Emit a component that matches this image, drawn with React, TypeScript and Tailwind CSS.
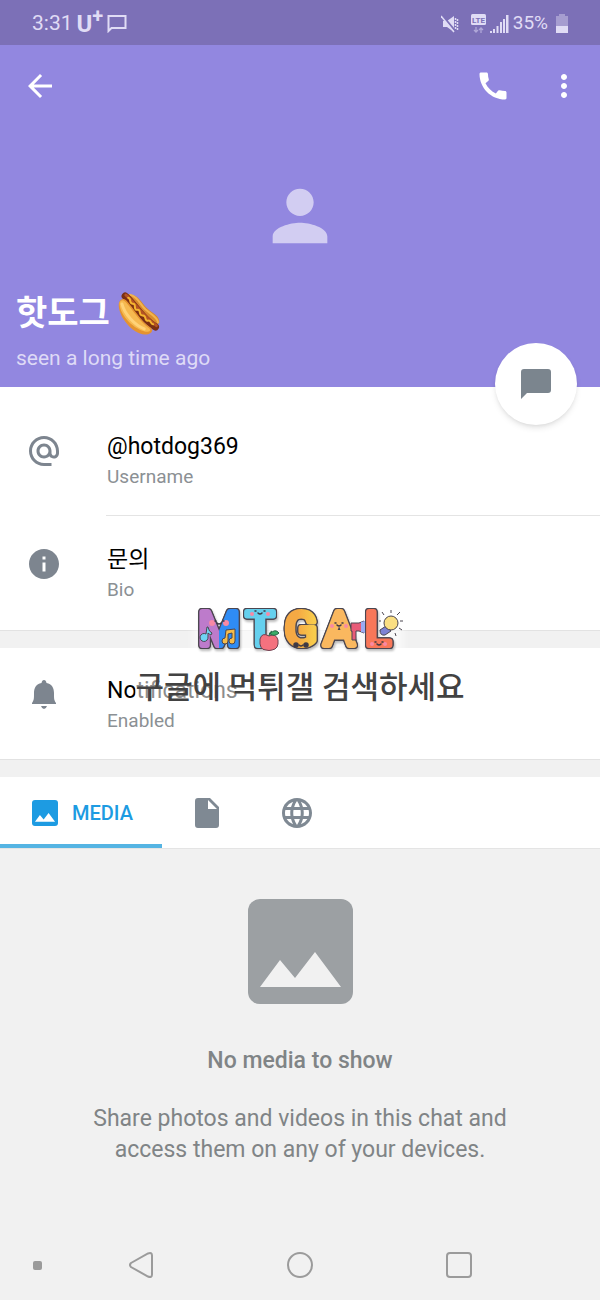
import React from 'react';
import {
  MdAlternateEmail,
  MdArrowBack,
  MdCall,
  MdInfo,
  MdLanguage,
  MdMoreVert,
  MdPerson,
} from 'react-icons/md';

const StatusBar: React.FC = () => (
  <div className="flex h-[45px] items-center justify-between bg-[#7c70b7] pt-0.5 pr-8 pl-8 text-[#e0dcf5]">
    <div className="flex items-center">
      <span className="text-[21px]">3:31</span>
      <span className="ml-1 flex text-2xl font-bold">
        U<sup className="top-0 self-start text-xl leading-4">+</sup>
      </span>
      <svg className="ml-1 h-[19px] w-5" viewBox="0 0 20 19" fill="none" stroke="currentColor" strokeWidth="2">
        <path d="M1.5 17V2H18.500V14H4.500Z" />
      </svg>
    </div>
    <div className="flex items-center">
      {/* Muted speaker */}
      <svg className="h-[18px] w-[18px]" viewBox="0 0 18 18">
        <path d="M2 6h4l7-5v16l-7-5H2z" fill="currentColor" />
        <path d="M1 0l14 17" stroke="#7c70b7" strokeWidth="2" />
        <path d="M0 1l13 16" stroke="currentColor" strokeWidth="1.500" />
        <path d="M14.500 3v12M16.500 4v11" stroke="currentColor" strokeWidth="1.500" strokeDasharray="2 1" />
      </svg>
      <svg className="ml-3 h-5 w-[15px]" viewBox="0 0 15 20">
        <rect width="15" height="11" rx="1.500" fill="currentColor" />
        <text x="7.500" y="8.500" fontSize="8" fontWeight="700" textAnchor="middle" fill="#7c70b7">LTE</text>
        <path d="M5 13v5M3 16l2 2 2-2M10 19v-5M8 16l2-2 2 2" fill="none" stroke="#b0a8d8" strokeWidth="1.300" />
      </svg>
      <svg className="ml-1 h-[18px] w-[19px]" viewBox="0 0 19 18" fill="currentColor">
        <path d="M0 16h2v2H0zM3 14h2v4H3zM6.500 11h2v7h-2zM10 7h2v11h-2zM13 4h2v14h-2zM16 0h2.500v18H16z" />
      </svg>
      <span className="ml-1 text-[19px]">35%</span>
      <svg className="ml-2 h-[19px] w-3" viewBox="0 0 12 19">
        <path d="M3 0h6v2h3v17H0V2h3z" fill="#a69dd0" />
        <path d="M0 12h12v7H0z" fill="currentColor" />
      </svg>
    </div>
  </div>
);

const HotDog: React.FC = () => (
  <svg className="h-[43px] w-[42px]" viewBox="0 0 128 130" fill="none" strokeLinecap="round" role="img" aria-label="hot dog">
    <path d="M30 8C60 2 70 32 88 48C106 66 127 70 126 93L112 104L22 22Z" fill="#d98a2c" />
    <path d="M36 8C60 12 66 36 84 53C100 67 120 76 122 92" stroke="#f2b44e" strokeWidth="6" />
    <path d="M22 12C44 28 72 82 114 106" stroke="#7b2f12" strokeWidth="22" />
    <path d="M24 9C46 25 76 74 117 102" stroke="#b65324" strokeWidth="9" />
    <path d="M3 32C8 20 17 17 27 27C48 49 68 87 98 107C112 118 99 130 82 129C40 126 -4 66 3 32Z" fill="#e5932f" />
    <path d="M5 31C11 20 19 24 28 35C48 58 68 91 94 109C105 119 91 123 79 119C43 110 2 65 5 31Z" fill="#f6b950" />
    <path d="M12 36C20 67 50 100 80 112" stroke="#ffd278" strokeWidth="9" />
    <path d="M31 17C42 19 32 33 44 35C58 34 45 53 58 54C72 51 61 72 75 71C88 69 79 89 91 87C102 84 98 97 107 98" stroke="#f5b52f" strokeWidth="6" />
  </svg>
);

const ImageGlyph: React.FC<{ className: string; peaks: string }> = ({ className, peaks }) => (
  <svg className={className} viewBox="0 0 105 105">
    <rect width="105" height="105" rx="12" fill="currentColor" />
    <path d="M12 88L32 61L47 79L67 53L93 88Z" className={peaks} />
  </svg>
);

type InfoRowProps = {
  icon: React.ReactNode;
  title: string;
  label: string;
};

const InfoRow: React.FC<InfoRowProps> = ({ icon, title, label }) => (
  <div className="flex">
    <div className="mt-0.5 ml-[26px] h-9 w-9 text-[#7d858f]">{icon}</div>
    <div className="ml-[45px]">
      <div className="text-[23px] leading-8 text-black">{title}</div>
      <div className="text-[19px] leading-7 text-[#8b9094]">{label}</div>
    </div>
  </div>
);

const Logo: React.FC = () => (
  <svg className="relative h-14 w-[210px]" viewBox="0 0 210 56" role="img" aria-label="MTGAL">
    <defs>
      <linearGradient id="m">
        <stop offset="0.500" stopColor="#bd7bcb" />
        <stop offset="0.500" stopColor="#2f8cf5" />
      </linearGradient>
      <linearGradient id="g">
        <stop offset="0.400" stopColor="#f5a944" />
        <stop offset="0.900" stopColor="#f8cb4b" />
      </linearGradient>
    </defs>
    <g
      className="[filter:drop-shadow(1px_0_0_#4b4650)_drop-shadow(-1px_0_0_#4b4650)_drop-shadow(0_1px_0_#4b4650)_drop-shadow(0_-1px_0_#4b4650)_drop-shadow(1px_2px_1px_#0004)]"
      fontSize="47"
      textAnchor="middle"
      strokeWidth="6"
      strokeLinejoin="round"
    >
      <text x="26" y="44" fill="url(#m)" stroke="url(#m)">M</text>
      <text x="67" y="44" fill="#65d0ee" stroke="#65d0ee">T</text>
      <text x="108" y="44" fill="url(#g)" stroke="url(#g)">G</text>
      <text x="146" y="44" fill="#fab85f" stroke="#fab85f">A</text>
      <text x="185" y="44" fill="#f87759" stroke="#f87759">L</text>
    </g>
    {/* Faces */}
    <g fill="#f889a4">
      <circle cx="19" cy="22" r="3" />
      <circle cx="33" cy="22" r="3" />
      <circle cx="59" cy="13" r="2" />
      <circle cx="75" cy="13" r="2" />
      <circle cx="139" cy="25" r="2" />
      <circle cx="153" cy="25" r="2" />
      <circle cx="179" cy="43" r="2" />
      <circle cx="192" cy="43" r="2" />
    </g>
    <g fill="none" stroke="#3e3a46" strokeWidth="1.500" strokeLinecap="round">
      <path d="M22 20h1M30 20h1M24 22q2 2 4 0M62 10h1M71 10h1M65 12q2 2 4 0M142 22h1M149 22h1M144 24q2 2 4 0M182 41h1M189 41h1M184 43q2 2 4 0" />
      <circle cx="103" cy="44" r="2" fill="#3e3a46" />
      <circle cx="113" cy="44" r="2" fill="#3e3a46" />
      <path d="M106 44q2 2 4 0" />
    </g>
    {/* Music notes */}
    <g stroke="#4b4650" strokeWidth="1">
      <path d="M14 26l1 0q1 5 4 6l-1 2q-2-1-3-2v4a4 4 0 1 1-2-3z" fill="#6fd4f4" />
      <path d="M33 29l9-1v12a3 3 0 1 1-3-3v-5l-4 1v7a3 3 0 1 1-3-3z" fill="#f6bc4b" />
    </g>
    {/* Apple */}
    <path d="M76 35q-7-4-9 3q-1 11 6 11q3 1 6 0q7-1 6-10q-2-7-9-4z" fill="#f4727f" stroke="#704050" strokeWidth="1" />
    <path d="M76 35q0-4 3-5M77 33q5-6 9-1q-4 4-9 1z" fill="#39ad68" stroke="#286646" strokeWidth="1" />
    {/* Megaphone */}
    <path d="M158 22h8l5-2v12l-5-2h-3v9h-4v-9h-1z" fill="#e85b78" stroke="#4b4650" strokeWidth="1" />
    <path d="M168 21l4-1v12l-4-1z" fill="#9baaf1" />
    {/* Light bulb */}
    <g stroke="#4b4650" strokeWidth="1">
      <path d="M187 29l6-4 5 5-6 4q-5 1-5-5z" fill="#7d83d5" />
      <circle cx="198" cy="22" r="7" fill="#fbdf83" />
      <path d="M198 12V9M191 14l-2-3M204 14l3-3M207 20h3M206 27l3 2M202 32l1 3M188 20h-2" />
    </g>
  </svg>
);

const Watermark: React.FC = () => (
  <div className="pointer-events-none absolute inset-x-0 top-[601px] flex flex-col items-center">
    <div className="relative mr-1">
      <div className="absolute inset-0 bg-white/60 blur-xs" />
      <Logo />
    </div>
    <div className="mt-[11px] bg-white/55 text-[31px] leading-10 font-medium whitespace-nowrap text-[#424242]">
      구글에 먹튀갤 검색하세요
    </div>
  </div>
);

const App: React.FC = () => {
  return (
    <div className="relative flex min-h-screen flex-col bg-[#f1f1f1] font-[Roboto,'Noto_Sans_CJK_KR',sans-serif]">
      <header className="relative bg-[#9287e0] text-white">
        <StatusBar />
        <div className="flex h-[82px] items-center pr-[18px] pl-[22px]">
          <button type="button" aria-label="Back">
            <MdArrowBack size={36} />
          </button>
          <button type="button" aria-label="Call" className="ml-auto">
            <MdCall size={36} />
          </button>
          <button type="button" aria-label="More options" className="ml-[35px]">
            <MdMoreVert size={36} />
          </button>
        </div>
        <div className="mt-12 flex justify-center text-[#d2cdf2]">
          <MdPerson size={82} />
        </div>
        <div className="px-4 pt-8 pb-[13px]">
          <h1 className="flex h-12 items-center gap-2 text-[34px] font-bold">
            핫도그
            <HotDog />
          </h1>
          <p className="mt-[5px] text-[21px] leading-8 text-[#dedaf6]">seen a long time ago</p>
        </div>
        <button
          type="button"
          aria-label="Send message"
          className="absolute right-[23px] -bottom-[38px] flex h-[82px] w-[82px] items-center justify-center rounded-full bg-white text-[#7b858e] shadow-md"
        >
          <svg className="h-[30px] w-[30px]" viewBox="0 0 30 30" fill="currentColor">
            <path d="M3 0h24q3 0 3 3v18q0 3-3 3H6l-6 6V3q0-3 3-3z" />
          </svg>
        </button>
      </header>

      <section className="border-b border-[#e2e2e2] bg-white">
        <div className="pt-11">
          <InfoRow icon={<MdAlternateEmail size={36} />} title="@hotdog369" label="Username" />
        </div>
        <div className="mt-6 ml-[106px] border-t border-[#e4e4e4]" />
        <div className="pt-7 pb-[26px]">
          <InfoRow icon={<MdInfo size={36} />} title="문의" label="Bio" />
        </div>
      </section>

      <section className="mt-[17px] border-b border-[#e2e2e2] bg-white pt-[27px] pb-6">
        <InfoRow
          icon={
            <svg viewBox="0 0 36 36" fill="currentColor">
              <path d="M18 3q2 0 2.500 3C26 7 28 11 28 16c0 6 0 7 2 10v1H6v-1c2-3 2-4 2-10 0-5 2-9 7.500-10q.5-3 2.500-3zM15 29h6q-1 3-3 3t-3-3z" />
            </svg>
          }
          title="Notifications"
          label="Enabled"
        />
      </section>

      <nav className="mt-[17px] flex h-[72px] border-b border-[#e4e4e4] bg-white text-[#7f8993]" role="tablist">
        <button
          type="button"
          role="tab"
          aria-selected="true"
          className="flex w-[162px] items-center border-b-4 border-[#55b4e3] pt-1 pl-8 text-[20px] font-medium text-[#1d9be2]"
        >
          <ImageGlyph className="mr-[14px] h-[26px] w-[26px]" peaks="fill-white" />
          MEDIA
        </button>
        <button type="button" role="tab" aria-selected="false" aria-label="Files" className="flex w-[90px] items-center justify-center">
          <svg className="h-[30px] w-6" viewBox="0 0 24 30" fill="currentColor">
            <path d="M3 0h12l9 9v18q0 3-3 3H3q-3 0-3-3V3q0-3 3-3zM13 2v9h9z" fillRule="evenodd" />
          </svg>
        </button>
        <button type="button" role="tab" aria-selected="false" aria-label="Links" className="flex w-[90px] items-center justify-center">
          <MdLanguage size={36} />
        </button>
      </nav>

      <main className="flex flex-1 flex-col items-center pt-[50px] text-center text-[#808486]">
        <ImageGlyph className="h-[105px] w-[105px] text-[#9ca0a3]" peaks="fill-[#f1f1f1]" />
        <h2 className="mt-[41px] text-[23px] leading-8 font-medium">No media to show</h2>
        <p className="mt-[26px] max-w-[440px] text-[23px] leading-[31px]">
          Share photos and videos in this chat and access them on any of your devices.
        </p>
      </main>

      <footer className="grid h-[70px] grid-cols-[1fr_26.5%_26.5%_26.5%_1fr] items-center text-[#9b9b9b]">
        <div className="flex justify-center pl-[13px]">
          <div className="h-[9px] w-[9px] rounded-xs bg-[#9b9b9b]" />
        </div>
        <button type="button" aria-label="Back" className="flex justify-center">
          <svg className="h-[26px] w-6" viewBox="0 0 24 26" fill="none" stroke="currentColor" strokeWidth="2">
            <path d="M2 11L19 1.500q4-1.500 4 2v19q0 3.500-4 2L2 15q-2-2 0-4z" />
          </svg>
        </button>
        <button type="button" aria-label="Home" className="flex justify-center">
          <span className="h-[26px] w-[26px] rounded-full border-2" />
        </button>
        <button type="button" aria-label="Recent apps" className="flex justify-center">
          <span className="h-[26px] w-[26px] rounded-sm border-2" />
        </button>
      </footer>

      <Watermark />
    </div>
  );
};

export default App;
